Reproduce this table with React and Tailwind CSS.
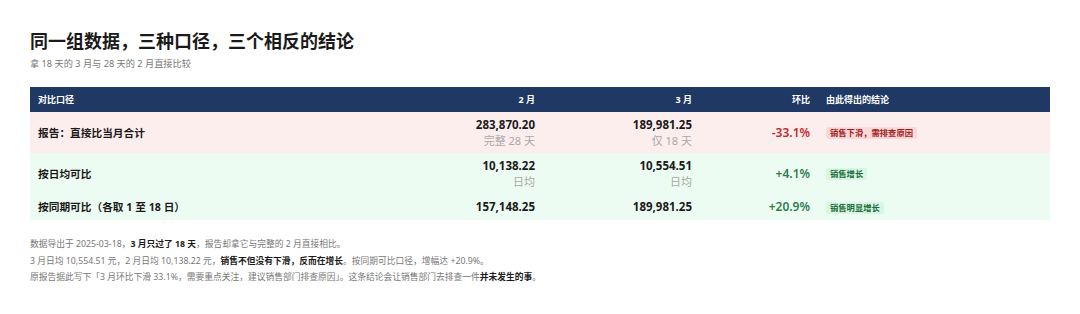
const rows = [
  {
    label: "报告：直接比当月合计",
    feb: "283,870.20",
    febSub: "完整 28 天",
    mar: "189,981.25",
    marSub: "仅 18 天",
    pct: "-33.1%",
    tone: "bad",
    note: "销售下滑，需排查原因",
  },
  {
    label: "按日均可比",
    feb: "10,138.22",
    febSub: "日均",
    mar: "10,554.51",
    marSub: "日均",
    pct: "+4.1%",
    tone: "good",
    note: "销售增长",
  },
  {
    label: "按同期可比（各取 1 至 18 日）",
    feb: "157,148.25",
    mar: "189,981.25",
    pct: "+20.9%",
    tone: "good",
    note: "销售明显增长",
  },
];

function Num({ value, sub }) {
  return (
    <div className="flex flex-col items-end">
      <span className="text-[11.5px] font-bold text-[#1a1a1a] leading-[16px]">{value}</span>
      {sub && <span className="text-[11px] text-[#a8a8a8] leading-[15px]">{sub}</span>}
    </div>
  );
}

export default function App() {
  return (
    <div className="w-[1080px] h-[314px] bg-white px-[30px] pt-[29px] font-['Noto_Sans','Noto_Sans_CJK_SC',sans-serif]">
      <h1 className="text-[18px] font-bold text-[#1a1a1a] leading-[24px]">同一组数据，三种口径，三个相反的结论</h1>
      <p className="mt-[4px] text-[9.2px] text-[#777] leading-[14px]">拿 18 天的 3 月与 28 天的 2 月直接比较</p>

      <table className="mt-[16px] w-[1020px] border-collapse table-fixed">
        <colgroup>
          <col className="w-[356px]" />
          <col className="w-[157px]" />
          <col className="w-[157px]" />
          <col className="w-[118px]" />
          <col />
        </colgroup>
        <thead>
          <tr className="bg-[#1f3864] text-white text-[9px] font-bold h-[25px] leading-[12px]">
            <th className="text-left px-[8px] py-0">对比口径</th>
            <th className="text-right px-[8px] py-0">2 月</th>
            <th className="text-right px-[8px] py-0">3 月</th>
            <th className="text-right px-[8px] py-0">环比</th>
            <th className="text-left px-[8px] py-0">由此得出的结论</th>
          </tr>
        </thead>
        <tbody>
          {rows.map((r) => {
            const bad = r.tone === "bad";
            return (
              <tr
                key={r.label}
                className={`${bad ? "bg-[#fdeeee]" : "bg-[#edfcf2]"} ${r.febSub ? "h-[41px]" : "h-[26px]"}`}
              >
                <td className="px-[8px] py-0 text-[10.7px] leading-[14px] font-bold text-[#1a1a1a]">{r.label}</td>
                <td className="px-[8px] py-0">
                  <Num value={r.feb} sub={r.febSub} />
                </td>
                <td className="px-[8px] py-0">
                  <Num value={r.mar} sub={r.marSub} />
                </td>
                <td
                  className={`px-[8px] py-0 text-right text-[12px] leading-[16px] font-semibold ${
                    bad ? "text-[#c62828]" : "text-[#2e7d4f]"
                  }`}
                >
                  {r.pct}
                </td>
                <td className="px-[8px] py-0 leading-[12px]">
                  <span
                    className={`inline-block align-middle px-[4px] text-[8.3px] font-bold leading-[12px] rounded-[2px] ${
                      bad ? "bg-[#fcd9d9] text-[#a31b1b]" : "bg-[#d8f6e2] text-[#1f6b3d]"
                    }`}
                  >
                    {r.note}
                  </span>
                </td>
              </tr>
            );
          })}
        </tbody>
      </table>

      <div className="mt-[16px] text-[8.75px] leading-[16.5px] text-[#777]">
        <p>
          数据导出于 2025-03-18，<b className="text-[#1a1a1a]">3 月只过了 18 天</b>，报告却拿它与完整的 2 月直接相比。
        </p>
        <p>
          3 月日均 10,554.51 元，2 月日均 10,138.22 元，
          <b className="text-[#1a1a1a]">销售不但没有下滑，反而在增长</b>。按同期可比口径，增幅达 +20.9%。
        </p>
        <p>
          原报告据此写下「3 月环比下滑 33.1%，需要重点关注，建议销售部门排查原因」。这条结论会让销售部门去排查一件
          <b className="text-[#1a1a1a]">并未发生的事</b>。
        </p>
      </div>
    </div>
  );
}
